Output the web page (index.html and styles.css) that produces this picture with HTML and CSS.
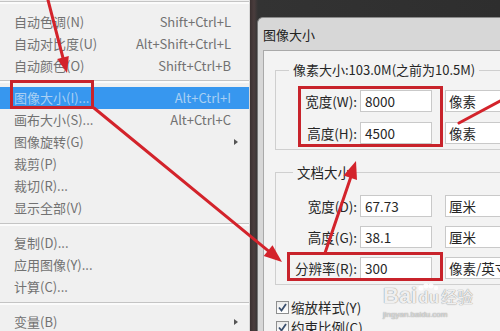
FILE: index.html
```html
<!DOCTYPE html>
<html lang="zh-CN">
<head>
<meta charset="utf-8">
<title>图像大小</title>
<link rel="stylesheet" href="styles.css">
</head>
<body>
<div class="screen">
  <div class="menu">
    <div class="sep first"></div>
    <div class="item"><span>自动色调(N)</span><span class="key">Shift+Ctrl+L</span></div>
    <div class="item"><span>自动对比度(U)</span><span class="key">Alt+Shift+Ctrl+L</span></div>
    <div class="item"><span>自动颜色(O)</span><span class="key">Shift+Ctrl+B</span></div>
    <div class="sep tight"></div>
    <div class="item active"><span>图像大小(I)...</span><span class="key">Alt+Ctrl+I</span></div>
    <div class="item"><span>画布大小(S)...</span><span class="key">Alt+Ctrl+C</span></div>
    <div class="item"><span>图像旋转(G)</span><span class="sub"></span></div>
    <div class="item"><span>裁剪(P)</span></div>
    <div class="item"><span>裁切(R)...</span></div>
    <div class="item"><span>显示全部(V)</span></div>
    <div class="sep"></div>
    <div class="item"><span>复制(D)...</span></div>
    <div class="item"><span>应用图像(Y)...</span></div>
    <div class="item"><span>计算(C)...</span></div>
    <div class="sep"></div>
    <div class="item"><span>变量(B)</span><span class="sub"></span></div>
  </div>
  <div class="desktop">
    <div class="window">
      <div class="titlebar">图像大小</div>
      <div class="panel">
        <fieldset class="group g1">
          <legend>像素大小:103.0M(之前为10.5M)</legend>
          <div class="rows">
            <div class="row"><span class="label">宽度(W):</span><span class="field">8000</span><span class="field unit">像素</span></div>
            <div class="row"><span class="label">高度(H):</span><span class="field">4500</span><span class="field unit">像素</span></div>
          </div>
        </fieldset>
        <fieldset class="group g2">
          <legend>文档大小</legend>
          <div class="rows">
            <div class="row"><span class="label">宽度(D):</span><span class="field">67.73</span><span class="field unit">厘米</span></div>
            <div class="row"><span class="label">高度(G):</span><span class="field">38.1</span><span class="field unit">厘米</span></div>
            <div class="row"><span class="label">分辨率(R):</span><span class="field">300</span><span class="field unit">像素/英寸</span></div>
          </div>
        </fieldset>
        <div class="checks">
          <div class="check"><span class="box"><svg width="11" height="11" viewBox="0 0 11 11"><path d="M2 5.5 L4.5 8.5 L9 2" fill="none" stroke="#3a4f6e" stroke-width="1.8"/></svg></span><span>缩放样式(Y)</span></div>
          <div class="check"><span class="box"><svg width="11" height="11" viewBox="0 0 11 11"><path d="M2 5.5 L4.5 8.5 L9 2" fill="none" stroke="#3a4f6e" stroke-width="1.8"/></svg></span><span>约束比例(C)</span></div>
        </div>
      </div>
    </div>
  </div>

  <div class="redbox rb-menu"></div>
  <div class="redbox rb-pixel"></div>
  <div class="redbox rb-res"></div>

  <svg class="marks" width="500" height="331" viewBox="0 0 500 331">
    <g stroke="#d3232b" stroke-width="3" stroke-linecap="round" fill="none">
      <line x1="48" y1="0" x2="63" y2="58"/>
      <line x1="94" y1="108" x2="268" y2="250.6"/>
      <line x1="325" y1="253" x2="350.5" y2="178"/>
      <line x1="500" y1="101" x2="459" y2="123"/>
    </g>
    <g fill="#d3232b">
      <polygon points="67,73 68.8,56 57.2,59"/>
      <polygon points="282,262 263.7,256 272.5,245.2"/>
      <polygon points="356,161 357,180 343.5,175.5"/>
    </g>
  </svg>

  <div class="watermark">
    <span class="wm-bai">Bai</span><span class="wm-du"><svg class="paw" width="20" height="9" viewBox="0 0 20 9"><circle cx="3" cy="5" r="2.6"/><circle cx="8" cy="2.8" r="2.6"/><circle cx="13" cy="2.8" r="2.6"/><circle cx="18" cy="5" r="2.2"/></svg>du</span><span class="wm-jy">经验</span>
    <div class="wm-url">jingyan.baidu.com</div>
  </div>
</div>
</body>
</html>
```
FILE: styles.css
```css
* { box-sizing: border-box; }
html, body { margin: 0; padding: 0; }
body {
  width: 500px;
  height: 331px;
  overflow: hidden;
  font-family: "Noto Sans CJK SC", "Noto Sans", sans-serif;
}
.screen {
  position: relative;
  display: flex;
  width: 500px;
  height: 331px;
  overflow: hidden;
}

/* ---- menu ---- */
.menu {
  width: 250px;
  flex: none;
  background: #f0f0f0;
  border-right: 1px solid #d6d6d6;
  color: #727272;
  font-size: 13px;
}
.sep { padding: 4px 0 6px; }
.sep::before {
  content: "";
  display: block;
  height: 2px;
  border-top: 1px solid #c4c4c4;
  background: #fbfbfb;
}
.sep.first { padding: 1px 0 7px; }
.sep.tight { padding: 3px 0 4px; }
.item {
  height: 22px;
  display: flex;
  align-items: center;
  justify-content: space-between;
  padding: 0 10px 0 14px;
  line-height: 22px;
}
.item .key { margin-right: 8px; }
.item.active { background: #3797ef; color: #a8cff3; }
.item .sub {
  width: 0;
  height: 0;
  border-left: 4px solid #555;
  border-top: 3.5px solid transparent;
  border-bottom: 3.5px solid transparent;
  margin-right: 1px;
}

/* ---- desktop / dialog ---- */
.desktop {
  flex: 1;
  min-width: 0;
  display: flex;
  flex-direction: column;
  padding: 17px 0 0 7px;
  background: linear-gradient(90deg, #3a3030 0px, #4a3d3d 4px, #333 8px, #2e2e2e 100%);
}
.window {
  flex: 1;
  display: flex;
  flex-direction: column;
  background: #d7d7d7;
  border-top: 1px solid #8a8a8a;
  border-left: 1px solid #767676;
  border-top-left-radius: 6px;
  padding-left: 5px;
  overflow: hidden;
}
.titlebar {
  height: 32px;
  flex: none;
  display: flex;
  align-items: center;
  font-size: 13px;
  color: #222;
}
.panel {
  flex: 1;
  background: #f3f3f3;
  border-top: 1px solid #a9a9a9;
  border-left: 1px solid #a9a9a9;
  padding: 10px 0 0 11px;
  overflow: hidden;
  color: #262626;
  font-size: 13.5px;
}
.group {
  margin: 0;
  width: 260px;
  min-width: 0;
  border: 1px solid #cfcfcf;
  padding: 11px 0 5px 0;
}
.group legend {
  padding: 0 4px;
  margin-left: 13px;
  line-height: 18px;
  font-size: 13px;
}
.g2 { margin-top: 13px; padding-top: 14px; }
.g2 legend { margin-left: 17px; font-size: 13.5px; }
.rows { display: flex; flex-direction: column; gap: 10px; }
.g2 .rows { gap: 9px; }
.row {
  display: grid;
  grid-template-columns: 81px 72px 1fr;
  column-gap: 3px;
  height: 22px;
}
.label { text-align: right; line-height: 22px; }
.field {
  height: 22px;
  background: #fff;
  border: 1px solid #c9c9c9;
  padding-left: 4px;
  line-height: 20px;
  white-space: nowrap;
  overflow: hidden;
}
.field.unit { margin-left: 10px; padding-left: 3px; }

.checks { margin-top: 12px; margin-left: 1px; }
.check {
  height: 20px;
  display: flex;
  align-items: center;
  gap: 2px;
}
.box {
  width: 13px;
  height: 13px;
  border: 1px solid #8e8f8f;
  background: linear-gradient(#eaeaea, #fff);
  display: flex;
  align-items: center;
  justify-content: center;
}

/* ---- annotations ---- */
.redbox {
  position: absolute;
  border: 3px solid #c8232b;
}
.rb-menu { left: 10px; top: 80px; width: 84px; height: 29px; }
.rb-pixel { left: 298px; top: 86px; width: 145px; height: 61px; }
.rb-res { left: 287px; top: 252px; width: 156px; height: 29px; }
.marks { position: absolute; left: 0; top: 0; pointer-events: none; }

.watermark {
  position: absolute;
  left: 383px;
  top: 284px;
  color: rgba(255, 255, 255, 0.85);
  text-shadow: 0 0 1px #9a9a9a, 0 0 1px #9a9a9a;
  font-family: "Liberation Sans", "Noto Sans CJK SC", sans-serif;
  white-space: nowrap;
  line-height: 24px;
}
.wm-bai { font-size: 22px; font-weight: bold; }
.wm-du { position: relative; font-size: 17px; font-weight: bold; margin-left: 1px; }
.paw { position: absolute; left: 0; top: -5px; fill: rgba(255,255,255,0.85); }
.wm-jy { font-family: "Noto Sans CJK SC", sans-serif; font-size: 16px; margin-left: 2px; }
.wm-url { font-size: 8px; line-height: 10px; color: rgba(255,255,255,0.6); }
```
